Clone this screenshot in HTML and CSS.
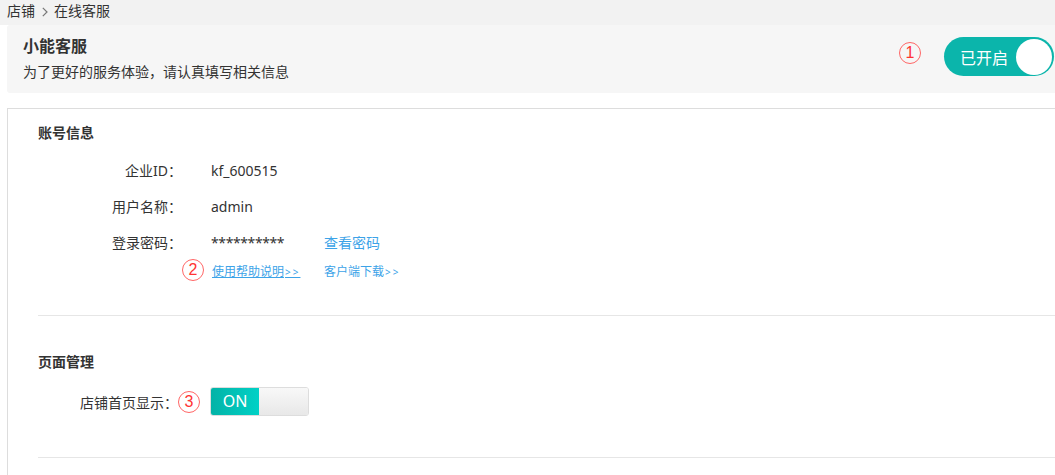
FILE: index.html
```html
<!doctype html>
<html>
    <head>
        <title>在线客服</title>
        <meta charset="utf-8">
        <meta name="viewport" content="width=device-width">

        <link rel="stylesheet" href="styles.css">
    </head>

    <body>
        <div class="crumbs">
            <span>店铺</span>
            <svg class="chev" width="6" height="10" viewBox="0 0 6 10"><path d="M0.8 0.8 L5 5 L0.8 9.2" fill="none" stroke="#777" stroke-width="1.2"/></svg>
            <span>在线客服</span>
        </div>

        <div class="page">
            <div class="card">
                <div class="card-text">
                    <h1>小能客服</h1>
                    <p>为了更好的服务体验，请认真填写相关信息</p>
                </div>
                <span class="mark mark-top">1</span>
                <div class="switch">
                    <span>已开启</span>
                    <i class="knob"></i>
                </div>
            </div>

            <div class="panel">
                <div class="section">
                    <h2>账号信息</h2>
                    <div class="row">
                        <span class="label">企业ID：</span>
                        <span class="value">kf_600515</span>
                    </div>
                    <div class="row">
                        <span class="label">用户名称：</span>
                        <span class="value">admin</span>
                    </div>
                    <div class="row">
                        <span class="label">登录密码：</span>
                        <span class="value stars">**********</span>
                        <a class="link" href="#">查看密码</a>
                    </div>
                    <div class="row row-links">
                        <span class="label"></span>
                        <span class="mark mark-row">2</span>
                        <span class="value"><a class="small-link underline" href="#">使用帮助说明<em>&gt;&gt;</em></a></span>
                        <a class="small-link" href="#">客户端下载<em>&gt;&gt;</em></a>
                    </div>
                </div>

                <div class="section section-page">
                    <h2>页面管理</h2>
                    <div class="row row-toggle">
                        <span class="label">店铺首页显示：</span>
                        <span class="mark mark-row3">3</span>
                        <div class="onoff">
                            <span class="on">ON</span>
                            <span class="off"></span>
                        </div>
                    </div>
                </div>
            </div>
        </div>
    </body>
</html>
```

FILE: styles.css
```css
body {
    margin: 0;
    background-color: white;
    color: #333;
    font-family: "Noto Sans", "Noto Sans CJK SC", sans-serif;
    font-size: 14px;
    overflow: hidden;
}
a {
    text-decoration: none;
}
.crumbs {
    height: 25px;
    line-height: 22px;
    padding-left: 7px;
    background-color: #f2f2f2;
    display: flex;
    align-items: flex-start;
}
.crumbs .chev {
    margin: 7px 6px 0 7px;
}
.page {
    padding-left: 7px;
}
.card {
    height: 68px;
    background-color: #f6f6f6;
    border-radius: 3px 0 0 3px;
    padding: 0 1px 0 16px;
    display: flex;
    align-items: flex-start;
}
.card-text {
    flex: 1;
    padding-top: 9px;
}
.card h1 {
    margin: 0;
    font-size: 16px;
    line-height: 24px;
    font-weight: bold;
}
.card p {
    margin: 4px 0 0 0;
    line-height: 20px;
}
.mark {
    width: 20px;
    height: 20px;
    border: 1px solid #f66;
    border-radius: 50%;
    color: #f33;
    font-size: 16px;
    line-height: 20px;
    text-align: center;
    font-family: "Liberation Sans", sans-serif;
    flex-shrink: 0;
}
.mark-top {
    margin: 17px 23px 0 0;
}
.switch {
    margin-top: 12px;
    width: 110px;
    height: 39px;
    box-sizing: border-box;
    border-radius: 20px;
    background-color: #0bb5ab;
    color: white;
    font-size: 16px;
    display: flex;
    align-items: center;
    justify-content: space-between;
    padding: 0 2px 0 16px;
}
.knob {
    width: 36px;
    height: 36px;
    border-radius: 50%;
    background-color: white;
}
.panel {
    margin-top: 15px;
    border-top: 1px solid #ddd;
    border-left: 1px solid #ddd;
    padding: 14px 0 0 30px;
    height: 352px;
}
.section {
    border-bottom: 1px solid #e6e6e6;
    padding-bottom: 35px;
}
.section-page {
    padding-bottom: 41px;
}
h2 {
    margin: 0;
    font-size: 14px;
    line-height: 20px;
    font-weight: bold;
}
.row {
    height: 36px;
    display: flex;
    align-items: center;
}
h2 + .row {
    margin-top: 9px;
}
.label {
    width: 144px;
    text-align: right;
    flex-shrink: 0;
}
.value {
    width: 113px;
    margin-left: 29px;
}
.stars {
    letter-spacing: -0.4px;
}
.link {
    color: #3ca3e8;
}
.row-links {
    height: 20px;
}
.row-links .mark-row {
    margin-right: 8px;
}
.row-links .value {
    margin-left: 0;
    width: 112px;
}
.small-link {
    color: #3ca3e8;
    font-size: 12px;
    font-family: "Noto Sans CJK SC", sans-serif;
}
.small-link em {
    font-style: normal;
    font-family: "Noto Sans", sans-serif;
    font-size: 10px;
    letter-spacing: 2px;
    margin-left: 1px;
}
.underline {
    text-decoration: underline;
}
.section-page h2 {
    margin-top: 36px;
}
.row-toggle {
    height: 29px;
}
h2 + .row-toggle {
    margin-top: 15px;
}
.row-toggle .label {
    width: 140px;
}
.mark-row3 {
    margin-right: 10px;
}
.onoff {
    width: 99px;
    height: 29px;
    box-sizing: border-box;
    border: 1px solid #ddd;
    border-radius: 3px;
    display: flex;
    overflow: hidden;
}
.onoff .on {
    width: 48px;
    background: linear-gradient(to right, #03b3a7, #00d1c6);
    color: white;
    font-size: 16px;
    line-height: 27px;
    text-align: center;
}
.onoff .off {
    flex: 1;
    background: linear-gradient(to bottom, #f8f8f8, #e8e8e8);
}
```
